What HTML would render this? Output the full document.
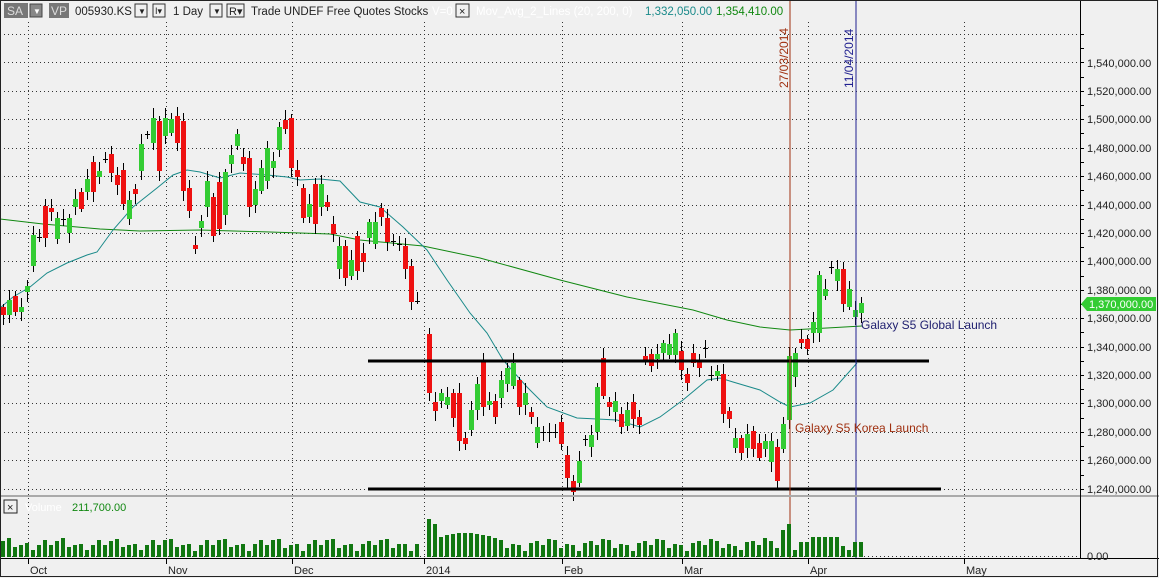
<!DOCTYPE html>
<html><head><meta charset="utf-8"><style>
html,body{margin:0;padding:0;background:#f0f0f0;}
svg{display:block;font-family:"Liberation Sans",sans-serif;}
</style></head><body>
<svg id="s" width="1159" height="578" xmlns="http://www.w3.org/2000/svg">
<rect x="0" y="0" width="1159" height="578" fill="#f0f0f0"/>
<g id="grid" stroke="#333" stroke-width="1" stroke-dasharray="1,3"></g>
<rect x="4" y="3" width="24" height="15" fill="#777"/>
<text x="7" y="15" font-size="12" fill="#ddd">SA</text>
<rect x="30" y="4" width="12" height="13" fill="#888" stroke="#444"/>
<text x="33" y="14" font-size="8" fill="#fff">▼</text>
<rect x="49" y="3" width="20" height="15" fill="#777"/>
<text x="51" y="15" font-size="12" fill="#ddd">VP</text>
<text x="75" y="15" font-size="11.5" fill="#222">005930.KS</text>
<rect x="135" y="4" width="12" height="13" fill="#f0f0f0" stroke="#333"/>
<text x="138" y="14" font-size="8" fill="#222">▼</text>
<rect x="153" y="4" width="12" height="13" fill="#f0f0f0" stroke="#333"/>
<text x="155" y="14" font-size="9" fill="#222">I▾</text>
<text x="173" y="15" font-size="11.5" fill="#222">1 Day</text>
<rect x="210" y="4" width="12" height="13" fill="#f0f0f0" stroke="#333"/>
<text x="213" y="14" font-size="8" fill="#222">▼</text>
<rect x="227" y="4" width="17" height="13" fill="#f0f0f0" stroke="#333"/>
<text x="229" y="15" font-size="11" fill="#222">R▾</text>
<text x="251" y="15" font-size="11.5" fill="#222">Trade  UNDEF  Free Quotes  Stocks</text>
<text x="432" y="15" font-size="11.5" fill="#fff">V=0</text>
<rect x="456" y="4" width="13" height="13" fill="#f0f0f0" stroke="#333"/>
<text x="459" y="15" font-size="11" fill="#222">×</text>
<text x="476" y="15" font-size="11.5" fill="#fff">Mov_Avg_2_Lines  (20, 200, 0)</text>
<text x="645" y="15" font-size="11.5" fill="#1a8a8a">1,332,050.00</text>
<text x="716" y="15" font-size="11.5" fill="#118811">1,354,410.00</text>
<polyline fill="none" stroke="#118811" stroke-width="1" points="0,219 43,224 100,229 140,231 200,230 270,232 330,234 360,240 423,246 480,258 560,280 627,297 693,310 727,320 760,327 790,330 827,328 862,326"/>
<polyline fill="none" stroke="#1a8a8a" stroke-width="1" points="0,308 13,297 30,287 47,273 67,263 87,255 97,252 113,230 133,207 157,188 173,175 187,170 200,172 220,178 240,173 267,175 287,177 300,180 320,179 340,181 360,202 380,207 403,227 427,250 447,280 470,313 487,333 503,360 527,387 547,407 577,418 617,420 640,427 660,417 683,400 707,380 720,378 733,382 760,390 780,402 790,407 810,403 833,390 857,363"/>
<g id="candles"></g>
<line x1="368" y1="361" x2="929" y2="361" stroke="#000" stroke-width="3"/>
<line x1="368" y1="489" x2="941" y2="489" stroke="#000" stroke-width="3"/>
<line x1="790" y1="0" x2="790" y2="558" stroke="#a03010" stroke-width="1"/>
<line x1="856" y1="0" x2="856" y2="558" stroke="#202090" stroke-width="1"/>
<text transform="translate(788,88) rotate(-90)" font-size="12" fill="#a03010">27/03/2014</text>
<text transform="translate(853,88) rotate(-90)" font-size="12" fill="#202090">11/04/2014</text>
<text x="861" y="329" font-size="12" fill="#202070">Galaxy S5 Global Launch</text>
<text x="795" y="432" font-size="12" fill="#a03010">Galaxy S5 Korea Launch</text>
<line x1="0" y1="496" x2="1159" y2="496" stroke="#aaa" stroke-width="2"/>
<line x1="1080.5" y1="0" x2="1080.5" y2="559" stroke="#000"/>
<line x1="0" y1="558.5" x2="1159" y2="558.5" stroke="#000"/>
<rect x="0.5" y="0.5" width="1157" height="576" fill="none" stroke="#222"/>
<g id="ticks" stroke="#000"></g>
<g font-size="11" fill="#222">
<text x="1087" y="67">1,540,000.00</text>
<text x="1087" y="95">1,520,000.00</text>
<text x="1087" y="123">1,500,000.00</text>
<text x="1087" y="152">1,480,000.00</text>
<text x="1087" y="180">1,460,000.00</text>
<text x="1087" y="209">1,440,000.00</text>
<text x="1087" y="237">1,420,000.00</text>
<text x="1087" y="265">1,400,000.00</text>
<text x="1087" y="294">1,380,000.00</text>
<text x="1087" y="322">1,360,000.00</text>
<text x="1087" y="351">1,340,000.00</text>
<text x="1087" y="379">1,320,000.00</text>
<text x="1087" y="407">1,300,000.00</text>
<text x="1087" y="436">1,280,000.00</text>
<text x="1087" y="464">1,260,000.00</text>
<text x="1087" y="493">1,240,000.00</text>
<text x="1087" y="560">0.00</text>
</g>
<polygon points="1081,304 1087,297 1156,297 1156,311 1087,311" fill="#33cc33"/>
<text x="1089" y="308" font-size="11" fill="#fff">1,370,000.00</text>
<rect x="4" y="500" width="13" height="13" fill="#f0f0f0" stroke="#222"/>
<text x="7" y="511" font-size="11" fill="#222">×</text>
<text x="25" y="511" font-size="11" fill="#fff">Volume</text>
<text x="72" y="511" font-size="11" fill="#118811">211,700.00</text>
<g id="vol" fill="#117711"></g>
<g font-size="11" fill="#222">
<text x="30" y="574">Oct</text>
<text x="168" y="574">Nov</text>
<text x="294" y="574">Dec</text>
<text x="426" y="574">2014</text>
<text x="564" y="574">Feb</text>
<text x="684" y="574">Mar</text>
<text x="810" y="574">Apr</text>
<text x="966" y="574">May</text>
</g>
<script>
(function(){
var NS="http://www.w3.org/2000/svg";
function el(p,n,a){var e=document.createElementNS(NS,n);for(var k in a)e.setAttribute(k,a[k]);p.appendChild(e);return e;}
var g=document.getElementById("grid");
var months=[28,166,292,424,562,682,808,964];
months.forEach(function(x){el(g,"line",{x1:x+.5,y1:22,x2:x+.5,y2:557});});
for(var y=34;y<=490;y+=28.42){var yy=Math.round(y)+.5;el(g,"line",{x1:0,y1:yy,x2:1080,y2:yy});}
el(g,"line",{x1:0,y1:556.5,x2:1080,y2:556.5});
var t=document.getElementById("ticks");
months.forEach(function(x){el(t,"line",{x1:x+.5,y1:559,x2:x+.5,y2:564});});
for(var y=34;y<=490;y+=14.21){var yy=Math.round(y)+.5;el(t,"line",{x1:1080,y1:yy,x2:1084,y2:yy});}
var z5="r307,315 g300,315 r296,312 g307,312 g286,292 g235,266 d237 r206,238 r208,212 g218,239 d219 g218,233 g199,207 r192,209 g179,192 r162,192 g171,177 d159 r154,173 r175,185 r170,204 g200,219 r189,194 g144,171 d134 g118,143 r121,171 g118,136 g119,133 r116,143 r121,191 r188,211 r245,249 g221,228 g181,207 r197,236 r182,229 g172,215 g155,164 g134,146 r157,164 r158,207 g189,205 g168,191 g148,181 g161,168 g127,150 r120,129 r118,168 r170,177 r188,218 g204,217 r184,224 g184,207 r202,207 r224,234 g246,269 r246,278 g260,276 r236,271 r253,262 g222,238 g222,244 r208,217 r218,242 d241 d244 r246,269 r266,302 d301";
var z6="r334,393 r402,411 g393,401 g397,405 r393,418 r393,441 r438,444 g410,430 g384,410 r361,407 g401,405 r401,417 g380,398 g368,384 g363,386 r380,407 g393,405 r412,417 g427,443 d432 d432 d432 r422,444 r455,478 r481,492 g461,483 d439 g435,447 g387,432 r358,396 r402,407 g401,412 r414,427 g410,426 r402,419 r417,425 r356,360 r354,366 g354,359 g343,353 g344,355 g333,355 r351,370 r374,383 r353,363 r362,368 d348 d375 g371,376 r374,414 r411,419 g438,448 r438,453 g434,448 r431,449 r443,458 g441,449 g441,462 r447,481 g424,449 g356,420 g353,377 r339,343 r339,349 g322,333 g275,333 g289,296 d267 g269,281 r269,304 g289,307 g310,317 g303,313";
var c=document.getElementById("candles"),v=document.getElementById("vol");
var idx=0;
function draw(str,x0){
 str.split(" ").forEach(function(s,i){
  var x=Math.round(x0+6*i);var ty=s[0];var p=s.slice(1).split(",").map(Number);
  var top=p[0],bot=p.length>1?p[1]:p[0];
  var w1=3+Math.abs(Math.round(7*Math.sin(idx*1.7))),w2=3+Math.abs(Math.round(7*Math.cos(idx*2.3)));
  el(c,"line",{x1:x+.5,y1:top-w1,x2:x+.5,y2:bot+w2,stroke:"#000","stroke-width":1});
  if(ty=="d"){el(c,"line",{x1:x-2,y1:top+.5,x2:x+3,y2:top+.5,stroke:"#000"});}
  else{el(c,"rect",{x:x-2,y:top,width:5,height:Math.max(2,bot-top),fill:ty=="r"?"#ee1111":"#33cc33"});}
  var h=13+Math.round(4*Math.sin(idx*2.1)+3*Math.cos(idx*0.7));
  if(x>=428&&x<=432)h=38;else if(x>=434&&x<=438)h=33;else if(x>439&&x<500)h=Math.max(h,18+Math.round(6*Math.cos(x)));
  if(x>=778&&x<=792)h=22+(x-778);
  if(x>=810&&x<=840)h=Math.max(h,20);
  el(v,"rect",{x:x-2,y:557-h,width:4,height:h});
  idx++;
 });
}
draw(z5,3.3);draw(z6,429.3);
})();
</script>
</svg>
</body></html>
